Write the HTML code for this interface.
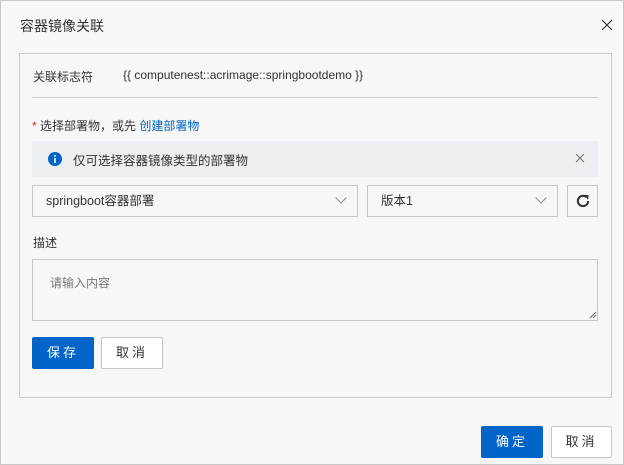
<!DOCTYPE html>
<html><head><meta charset="utf-8"><style>
*{box-sizing:border-box;margin:0;padding:0}
body{width:624px;height:465px;background:#f7f7f7;font-family:"Liberation Sans","Noto Sans CJK SC",sans-serif;color:#333;position:relative;overflow:hidden;font-size:12px}
.frame{position:absolute;left:0;top:0;width:624px;height:465px;border:1px solid #c8c8c8}
.abs{position:absolute}
.title{left:20px;top:16px;font-size:14px;color:#333}
.panel{left:19px;top:53px;width:593px;height:345px;border:1px solid #c9cbd0}
.btn{position:absolute;height:32px;border:1px solid #c4c6cc;background:#fff;color:#333;font-size:13px;text-align:center;line-height:30px;letter-spacing:3px;border-radius:2px}
.blue{background:#0064c8;border-color:#0064c8;color:#fff}
.sel{position:absolute;height:32px;border:1px solid #c4c6cc;background:#f7f7f7;line-height:30px;padding-left:13px;font-size:12.5px}
.chev{position:absolute;right:12px;top:9px;width:8px;height:8px;border-right:1px solid #888;border-bottom:1px solid #888;transform:rotate(45deg)}
</style></head><body>
<div class="frame"></div>
<div class="abs title">容器镜像关联</div>
<svg class="abs" style="left:601px;top:19px" width="12" height="12"><path d="M1 1L11 11M11 1L1 11" stroke="#333" stroke-width="1.2"/></svg>
<div class="abs panel"></div>
<div class="abs" style="left:33px;top:68px">关联标志符</div>
<div class="abs" style="left:123px;top:68px">{{ computenest::acrimage::springbootdemo }}</div>
<div class="abs" style="left:32px;top:97px;width:566px;height:1px;background:#c9cbd0"></div>
<div class="abs" style="left:32px;top:117px"><span style="color:#d93026">*</span> 选择部署物，或先 <span style="color:#0064c8">创建部署物</span></div>
<div class="abs" style="left:32px;top:141px;width:566px;height:36px;background:#eceef2"></div>
<svg class="abs" style="left:48px;top:152px" width="14" height="14"><circle cx="7" cy="7" r="7" fill="#0064c8"/><rect x="6.2" y="6" width="1.6" height="5" fill="#fff"/><rect x="6.2" y="3" width="1.6" height="1.6" fill="#fff"/></svg>
<div class="abs" style="left:73px;top:150px;font-size:12.5px">仅可选择容器镜像类型的部署物</div>
<svg class="abs" style="left:575px;top:153px" width="10" height="10"><path d="M1 1L9 9M9 1L1 9" stroke="#777" stroke-width="1.1"/></svg>
<div class="sel" style="left:32px;top:185px;width:326px">springboot容器部署<div class="chev" style="top:8px"></div></div>
<div class="sel" style="left:367px;top:185px;width:191px">版本1<div class="chev" style="top:8px"></div></div>
<div class="sel" style="left:567px;top:185px;width:31px;padding:0"><svg style="position:absolute;left:7px;top:7px" width="16" height="16" viewBox="0 0 14 14"><path d="M11.5 7A4.5 4.5 0 1 1 10 3.6" fill="none" stroke="#333" stroke-width="1.8"/><path d="M8 1.5L12 2L11.5 6Z" fill="#333"/></svg></div>
<div class="abs" style="left:33px;top:234px">描述</div>
<div class="abs" style="left:32px;top:259px;width:566px;height:62px;border:1px solid #c4c6cc"></div>
<div class="abs" style="left:50px;top:274px;color:#777">请输入内容</div>
<svg class="abs" style="left:589px;top:311px" width="8" height="8"><path d="M1 7L7 1M4 7L7 4" stroke="#666"/></svg>
<div class="btn blue" style="left:32px;top:337px;width:62px">保存</div>
<div class="btn" style="left:101px;top:337px;width:62px">取消</div>
<div class="btn blue" style="left:481px;top:426px;width:62px">确定</div>
<div class="btn" style="left:551px;top:426px;width:61px">取消</div>
</body></html>
